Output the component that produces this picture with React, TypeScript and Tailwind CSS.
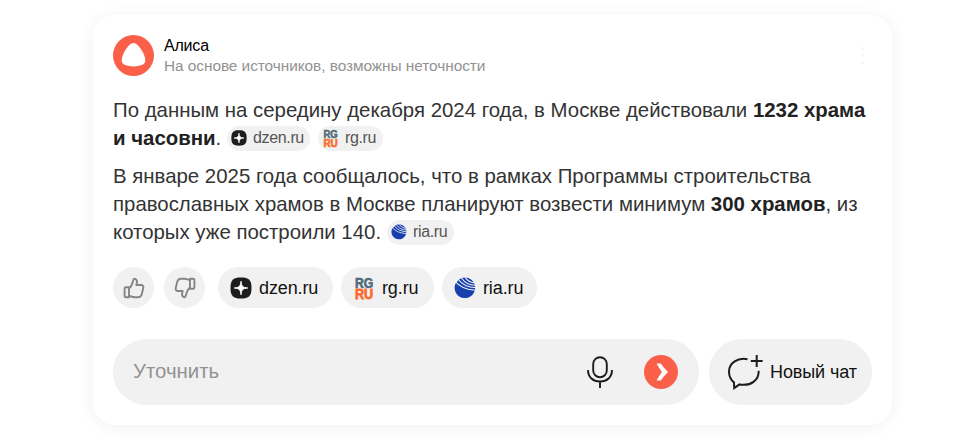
import type { ReactNode } from "react";

function DzenIcon({ size }: { size: number }) {
  return (
    <svg width={size} height={size} viewBox="0 0 22 22" className="shrink-0">
      <path d="M11 .5C19 .5 21.5 3 21.5 11S19 21.5 11 21.5.5 19 .5 11 3 .5 11 .5Z" fill="#1d1d1f" />
      <path d="M11 4.2c.5 5 1.8 6.3 6.8 6.8-5 .5-6.3 1.8-6.8 6.8-.5-5-1.8-6.3-6.8-6.8 5-.5 6.3-1.8 6.8-6.8Z" fill="#fff" stroke="#fff" strokeWidth=".9" />
    </svg>
  );
}

function RgIcon({ size }: { size: number }) {
  return (
    <svg width={size} height={size} viewBox="0 0 22 22" className="shrink-0 overflow-visible font-['Liberation_Sans',Arial,sans-serif] font-bold">
      <text x="2" y="10.6" fontSize="14" textLength="18" lengthAdjust="spacingAndGlyphs" fill="#526b7c" stroke="#526b7c" strokeWidth=".7">RG</text>
      <text x="2" y="21.6" fontSize="14.500" textLength="18" lengthAdjust="spacingAndGlyphs" fill="#fa6b2d" stroke="#fa6b2d" strokeWidth=".8">RU</text>
    </svg>
  );
}

function RiaIcon({ size }: { size: number }) {
  return (
    <svg width={size} height={size} viewBox="0 0 22 22" className="shrink-0">
      <path d="M1.4 6.8A10.3 10.3 0 1 0 20.8 8Q20 4.6 17.4 2.8A10.3 10.3 0 0 0 5 2.6Z" fill="#173fae" />
      <g fill="none" stroke="#f1f1f1" strokeWidth="1.1">
        <path d="M1 4Q7 12.500 22 13.300" />
        <path d="M4 2Q10 10.500 22 10.700" />
        <path d="M7.500 1Q12.500 8.600 22 8.200" />
        <path d="M11 0Q14.500 6 21 5.700" />
      </g>
    </svg>
  );
}

function ThumbIcon({ down = false }: { down?: boolean }) {
  return (
    <svg width="22" height="22" viewBox="0 0 22 22" fill="none" stroke="#858585" strokeWidth="1.9" strokeLinejoin="round" className={down ? "rotate-180" : ""}>
      <path d="M1.600 11.500Q1.600 10.200 2.900 10.200H6V20.300H2.900Q1.600 20.300 1.600 19ZM6 11.500C8.400 9.600 9 8 10 4.200 10.500 2 11 1.600 12 1.900c1.800.5 2.200 2.300 1.900 3.800L13.300 8H18c1.800 0 2.700 1.300 2.300 2.800l-1.500 6.300c-.5 2-1.700 3.200-3.800 3.200h-3.500C9 20.300 7.500 19.500 6 18.700" />
    </svg>
  );
}

function Chip({ icon, label, className }: { icon: ReactNode; label: string; className: string }) {
  return (
    <span className={`flex h-[25px] shrink-0 items-center gap-[6px] rounded-full bg-[#f1f1f1] pl-1 text-[16px] leading-[25px] tracking-[-0.35px] text-[#555] ${className}`}>
      {icon}
      <span className="-mt-px">{label}</span>
    </span>
  );
}

function SourceButton({ icon, label, className }: { icon: ReactNode; label: string; className: string }) {
  return (
    <button className={`flex h-[41px] shrink-0 items-center gap-[7px] rounded-full bg-[#f1f1f1] pl-3 text-[18px] tracking-[-0.12px] text-[#111] ${className}`}>
      {icon}
      <span className="pt-px">{label}</span>
    </button>
  );
}

export default function App() {
  return (
    <main className="flex h-[438px] w-[974px] overflow-hidden bg-white pt-[15px] pl-[93px] font-['Liberation_Sans',Arial,sans-serif]">
      <section className="flex h-[410px] w-[799px] shrink-0 flex-col rounded-[22px] bg-white px-5 pt-5 shadow-[0_2px_18px_rgba(0,0,0,0.06)]">
        <header className="flex h-[41px] items-center">
          <svg width="41" height="41" viewBox="0 0 41 41" className="shrink-0">
            <circle cx="20.5" cy="20.5" r="20.5" fill="#fa6049" />
            <path d="M20.5 8C25.4 8 32.3 19.5 32.3 25.6 32.3 29.8 27 31.4 20.5 31.4S8.7 29.8 8.7 25.6C8.7 19.5 15.6 8 20.5 8Z" fill="#fff" />
          </svg>
          <div className="ml-[10px] flex flex-col whitespace-nowrap">
            <span className="text-[16px] leading-5 tracking-[-0.2px] text-black">Алиса</span>
            <span className="text-[15.4px] leading-5 tracking-[-0.05px] text-[#929292]">На основе источников, возможны неточности</span>
          </div>
          <div className="mr-[8px] ml-auto flex flex-col gap-1">
            <i className="size-[3px] rounded-full bg-[#f5f5f5]" />
            <i className="size-[3px] rounded-full bg-[#f5f5f5]" />
            <i className="size-[3px] rounded-full bg-[#f5f5f5]" />
          </div>
        </header>

        <div className="mt-5 text-[20.4px] leading-7 whitespace-nowrap text-[#333]">
          <p>По данным на середину декабря 2024 года, в Москве действовали <b className="text-[#222]">1232 храма</b></p>
          <div className="flex h-7 items-center">
            <p className="w-[114px]"><b className="text-[#222]">и часовни</b>.</p>
            <Chip icon={<DzenIcon size={16} />} label="dzen.ru" className="w-[83px]" />
            <Chip icon={<RgIcon size={17} />} label="rg.ru" className="ml-2 w-[65px]" />
          </div>
        </div>
        <div className="mt-[10px] text-[20.4px] leading-7 whitespace-nowrap text-[#333]">
          <p>В январе 2025 года сообщалось, что в рамках Программы строительства</p>
          <p>православных храмов в Москве планируют возвести минимум <b className="text-[#222]">300 храмов</b>, из</p>
          <div className="flex h-7 items-center">
            <p className="w-[274px]">которых уже построили 140.</p>
            <Chip icon={<RiaIcon size={16} />} label="ria.ru" className="w-[67px]" />
          </div>
        </div>

        <div className="mt-[21px] flex h-[41px] items-center">
          <button className="flex size-[41px] items-center justify-center rounded-full bg-[#f1f1f1]"><ThumbIcon /></button>
          <button className="ml-[10px] flex size-[41px] items-center justify-center rounded-full bg-[#f1f1f1]"><ThumbIcon down /></button>
          <SourceButton icon={<DzenIcon size={22} />} label="dzen.ru" className="ml-[13px] w-[115px]" />
          <SourceButton icon={<RgIcon size={22} />} label="rg.ru" className="ml-2 w-[93px]" />
          <SourceButton icon={<RiaIcon size={22} />} label="ria.ru" className="ml-2 w-[95px]" />
        </div>

        <div className="mt-[31px] flex h-[66px] gap-[10px]">
          <div className="flex w-[586px] items-center rounded-full bg-[#f1f1f1] pr-[21px] pl-5">
            <span className="-mt-px text-[20.4px] text-[#929292]">Уточнить</span>
            <svg width="28" height="34" viewBox="0 0 28 34" fill="none" stroke="#1d1d1f" strokeWidth="1.9" className="ml-auto">
              <rect x="7.2" y="2.2" width="13.6" height="20" rx="6.8" />
              <path d="M2 15c0 7.4 5 11.5 12 11.5S26 22.400 26 15M14 26.500V33" />
            </svg>
            <svg width="34" height="34" viewBox="0 0 34 34" className="ml-[30px]">
              <circle cx="17" cy="17" r="17" fill="#fa6049" />
              <path d="M12.500 8.500h4.200q3.600 5 7.300 8.500-3.700 3.500-7.300 8.500h-4.200q2.700-4.700 5.400-8.500-2.700-3.800-5.400-8.500Z" fill="#fff" />
            </svg>
          </div>
          <button className="flex w-[163px] items-center rounded-full bg-[#f1f1f1] pl-[18px] text-[18px] tracking-[-0.1px] whitespace-nowrap text-[#111]">
            <svg width="36" height="36" viewBox="0 0 36 36" fill="none" stroke="#1d1d1f" strokeWidth="2" className="shrink-0">
              <path d="M20.500 5.200C10 3.400 2 9.500 2 17.500c0 5.400 2 8.600 5 10.900l.2 5.700 5.300-3.700C24 32.500 32 26 31.700 16.700M29.700 1V13M23.800 7H35.600" />
            </svg>
            <span className="ml-[7px]">Новый чат</span>
          </button>
        </div>
      </section>
    </main>
  );
}
